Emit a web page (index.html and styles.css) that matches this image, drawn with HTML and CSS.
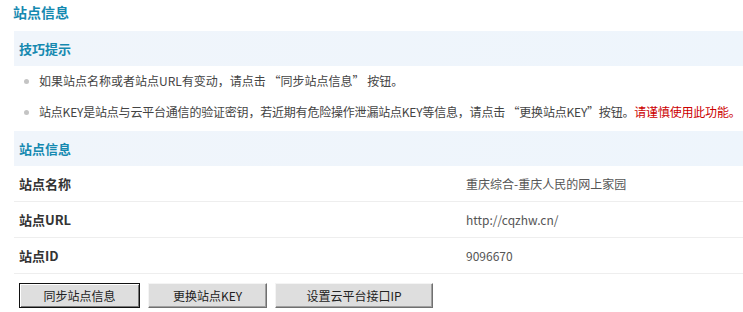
FILE: index.html
```html
<!DOCTYPE html>
<html lang="zh-CN">
<head>
<meta charset="utf-8">
<title>站点信息</title>
<link rel="stylesheet" href="styles.css">
</head>
<body>
<div class="page">
  <h1 class="title">站点信息</h1>
  <div class="band"><span class="band-title">技巧提示</span></div>
  <ul class="tips">
    <li>如果站点名称或者站点URL有变动，请点击 “同步站点信息” 按钮。</li>
    <li class="tight">站点KEY是站点与云平台通信的验证密钥，若近期有危险操作泄漏站点KEY等信息，请点击 “更换站点KEY”按钮。<span class="warn">请谨慎使用此功能。</span></li>
  </ul>
  <div class="band"><span class="band-title">站点信息</span></div>
  <div class="rows">
    <div class="row"><div class="label">站点名称</div><div class="value">重庆综合-重庆人民的网上家园</div></div>
    <div class="row"><div class="label">站点URL</div><div class="value">http://cqzhw.cn/</div></div>
    <div class="row"><div class="label">站点ID</div><div class="value">9096670</div></div>
  </div>
  <div class="actions">
    <button class="btn btn-focus">同步站点信息</button>
    <button class="btn btn-2">更换站点KEY</button>
    <button class="btn btn-3">设置云平台接口IP</button>
  </div>
</div>
</body>
</html>
```
FILE: styles.css
```css
html, body {
  margin: 0;
  padding: 0;
  background: #fff;
}
body {
  font-family: "Noto Sans CJK SC", "DejaVu Sans", sans-serif;
  font-size: 12px;
  color: #444;
  overflow: hidden;
}
.page {
  padding-left: 14px;
  width: 760px;
}
.title {
  margin: 0;
  margin-left: -1px;
  height: 31px;
  line-height: 25px;
  font-size: 14px;
  font-weight: bold;
  color: #1589b0;
}
.band {
  height: 35px;
  display: flex;
  align-items: center;
  padding-left: 5px;
  background: linear-gradient(to right, #f0f5fb, #eef5fc);
}
.band-title {
  font-size: 13px;
  font-weight: bold;
  color: #1589b0;
}
.tips {
  list-style: none;
  margin: 0;
  padding: 0;
  height: 65px;
  display: flex;
  flex-direction: column;
  padding-top: 4px;
  box-sizing: border-box;
  white-space: nowrap;
}
.tips li {
  height: 32px;
  line-height: 22px;
  padding-left: 25px;
  position: relative;
  color: #444;
}
.tips li.tight {
  letter-spacing: -0.2px;
}
.tips li::before {
  content: "";
  position: absolute;
  left: 10px;
  top: 9px;
  width: 5px;
  height: 5px;
  border-radius: 50%;
  background: #c4c4c4;
}
.warn {
  color: #cc0000;
}
.rows {
  display: flex;
  flex-direction: column;
}
.row {
  display: flex;
  align-items: center;
  height: 35px;
  border-bottom: 1px solid #eeeeee;
}
.label {
  width: 447px;
  padding-left: 5px;
  font-size: 13px;
  font-weight: bold;
  color: #333;
}
.value {
  color: #555;
}
.actions {
  display: flex;
  gap: 8px;
  padding-top: 9px;
  padding-left: 5px;
}
.btn {
  font-family: "Noto Sans CJK SC", "DejaVu Sans", sans-serif;
  font-size: 12px;
  color: #222;
  height: 25px;
  padding: 0;
  background: #dedede;
  border: 1px solid;
  border-color: #f4f4f4 #707070 #707070 #f4f4f4;
  box-shadow: inset -1px -1px 0 #a0a0a0;
}
.btn-focus {
  border: 1px solid #111;
  box-shadow: inset 1px 1px 0 #fff, inset -1px -1px 0 #777;
  width: 121px;
}
.btn-2 { width: 119px; }
.btn-3 { width: 158px; }
```
